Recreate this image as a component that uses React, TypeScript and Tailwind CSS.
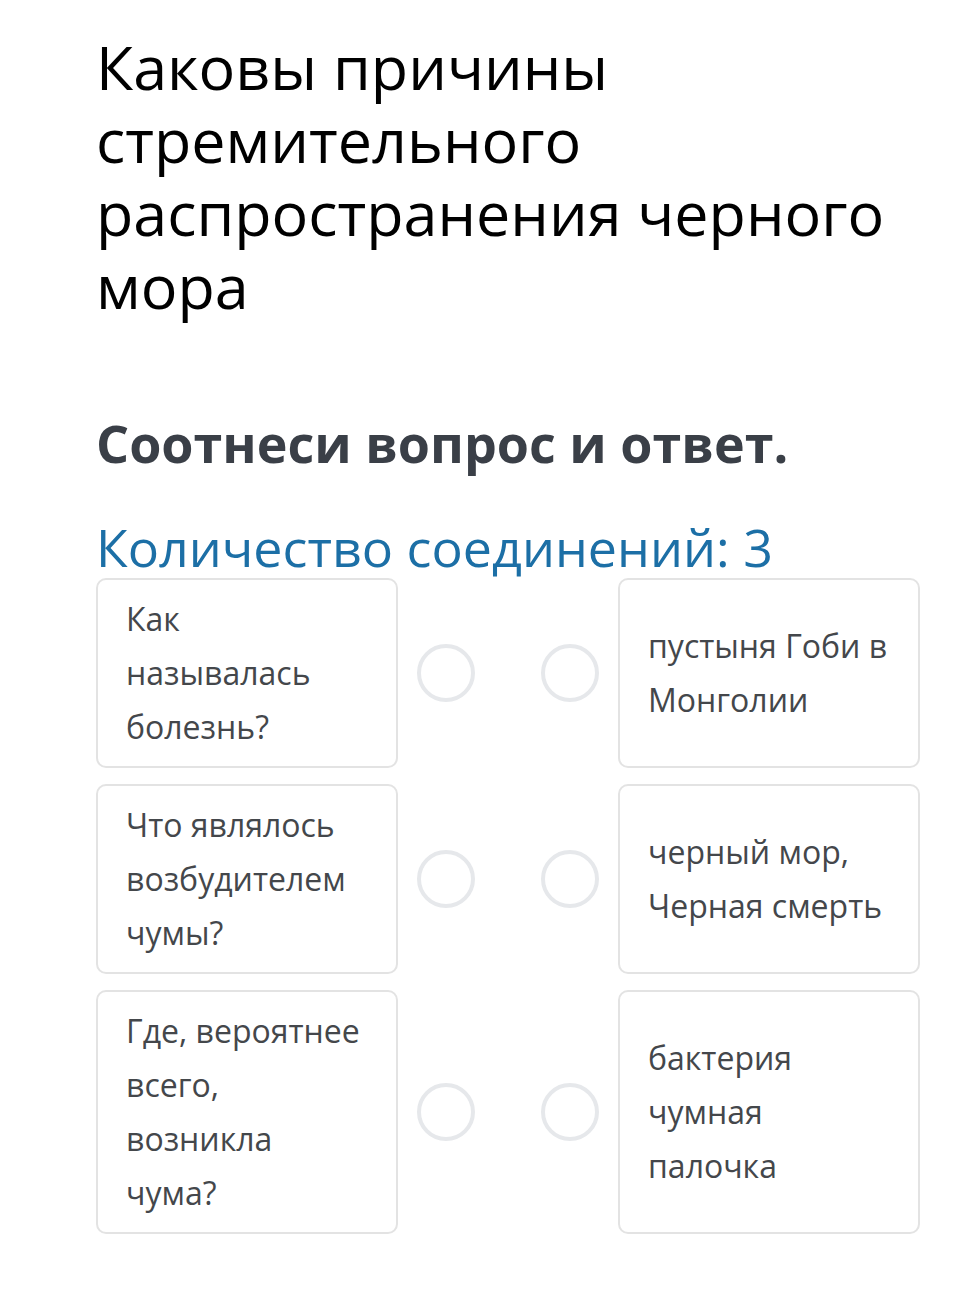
import React from "react";

const rows: { q: string[]; a: string[] }[] = [
  { q: ["Как", "называлась", "болезнь?"], a: ["пустыня Гоби в", "Монголии"] },
  { q: ["Что являлось", "возбудителем", "чумы?"], a: ["черный мор,", "Черная смерть"] },
  { q: ["Где, вероятнее", "всего,", "возникла", "чума?"], a: ["бактерия", "чумная", "палочка"] },
];

function Card({ lines }: { lines: string[] }) {
  return (
    <div className="flex items-center rounded-[10px] border-2 border-[#e3e3e3] bg-white px-[28px] py-[12px]">
      <p className="text-[32px] leading-[54px] text-[#44474b]">
        {lines.map((l, i) => (
          <span key={i} className="block whitespace-nowrap">
            {l}
          </span>
        ))}
      </p>
    </div>
  );
}

export default function App() {
  return (
    <div
      className="min-h-[1300px] bg-white pl-[96px] pt-[30px]"
      style={{ fontFamily: '"Open Sans", "Noto Sans", sans-serif' }}
    >
      <div className="w-[824px]">
        <h1 className="text-[61px] leading-[73px] font-normal text-black">
          Каковы причины стремительного распространения черного мора
        </h1>
        <h2 className="mt-[91px] text-[52px] leading-[60px] font-bold text-[#3a3f47]">
          Соотнеси вопрос и ответ.
        </h2>
        <div className="mt-[44px] text-[52px] leading-[60px] text-[#1c6fa6]">
          Количество соединений: 3
        </div>
        <div className="mt-[1px] flex flex-col gap-[16px]">
          {rows.map((r, i) => (
            <div key={i} className="grid grid-cols-[302px_1fr_302px]">
              <Card lines={r.q} />
              <div className="flex items-center justify-between px-[19px]">
                <div className="h-[58px] w-[58px] rounded-full border-4 border-[#e6e8eb]" />
                <div className="h-[58px] w-[58px] rounded-full border-4 border-[#e6e8eb]" />
              </div>
              <Card lines={r.a} />
            </div>
          ))}
        </div>
      </div>
    </div>
  );
}
